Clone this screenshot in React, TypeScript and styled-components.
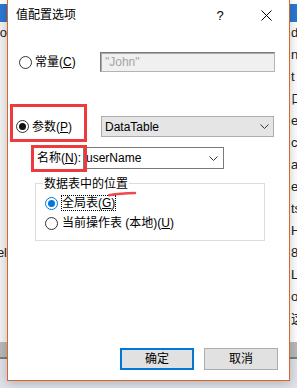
import React from "react";
import styled, { createGlobalStyle } from "styled-components";

const Global = createGlobalStyle`
  html, body { margin: 0; padding: 0; background: #fff; }
  body {
    font-family: "Liberation Sans", "Noto Sans CJK SC", sans-serif;
    font-size: 12px;
    color: #000;
  }
  * { box-sizing: border-box; }
`;

const Screen = styled.div`
  position: relative;
  width: 297px;
  height: 388px;
  overflow: hidden;
  background: #fff;
  display: flex;
  flex-direction: column;
`;

const Band = styled.div<{ $h: number; $bg: string }>`
  height: ${(p) => p.$h}px;
  flex: none;
  background: ${(p) => p.$bg};
`;

const Desk = styled.div`
  height: 320px;
  flex: none;
  display: grid;
  grid-template-columns: 7px 1fr 7px;
  background: #fff;
`;

const Strip = styled.div<{ $end?: boolean; $bg?: string }>`
  overflow: hidden;
  background: ${(p) => p.$bg || "#fff"};
  display: flex;
  flex-direction: column;
  align-items: stretch;
  font-size: 13px;
  line-height: 22px;
  color: #222;
`;

const StripLine = styled.div<{ $end?: boolean }>`
  height: 22px;
  display: flex;
  white-space: nowrap;
  justify-content: ${(p) => (p.$end ? "flex-end" : "flex-start")};
  padding-left: ${(p) => (p.$end ? 0 : 1)}px;
`;

const Dialog = styled.div`
  position: absolute;
  left: 7px;
  top: -1px;
  width: 283px;
  height: 382px;
  border: 1px solid #d9662b;
  background: #fff;
  box-shadow: 0 2px 10px rgba(0, 0, 0, 0.22);
  display: flex;
  flex-direction: column;
`;

const TitleBar = styled.div`
  height: 30px;
  flex: none;
  display: flex;
  align-items: center;
  padding-left: 8px;
`;

const TitleText = styled.div`
  flex: 1;
  font-size: 12px;
  line-height: 14px;
`;

const CaptionButton = styled.div`
  width: 46px;
  height: 30px;
  display: flex;
  align-items: center;
  justify-content: center;
  font-size: 13px;
`;

const Row = styled.div<{ $mt: number; $h: number; $pl: number }>`
  margin-top: ${(p) => p.$mt}px;
  height: ${(p) => p.$h}px;
  padding-left: ${(p) => p.$pl}px;
  display: flex;
  align-items: center;
  flex: none;
`;

const RadioLabel = styled.div<{ $w?: number; $gap?: number }>`
  width: ${(p) => (p.$w ? `${p.$w}px` : "auto")};
  height: 20px;
  display: flex;
  align-items: center;
  gap: ${(p) => p.$gap ?? 3}px;
  flex: none;
  line-height: 14px;
`;

const Circle = styled.span<{ $on?: "black" | "blue" }>`
  width: 13px;
  height: 13px;
  border-radius: 50%;
  flex: none;
  border: 1px solid
    ${(p) => (p.$on === "blue" ? "#0078d7" : "#333")};
  background: #fff;
  display: flex;
  align-items: center;
  justify-content: center;
  &::after {
    content: "";
    display: ${(p) => (p.$on ? "block" : "none")};
    width: 7px;
    height: 7px;
    border-radius: 50%;
    background: ${(p) => (p.$on === "blue" ? "#0078d7" : "#111")};
  }
`;

const FieldLabel = styled.div<{ $w: number }>`
  width: ${(p) => p.$w}px;
  flex: none;
  line-height: 14px;
`;

const DisabledBox = styled.div`
  width: 175px;
  height: 20px;
  border: 1px solid #b4b4b4;
  border-top-color: #7c7c7c;
  border-left-color: #7c7c7c;
  box-shadow: inset 1px 1px 0 #a9a9a9;
  background: #f0f0f0;
  color: #a5a5a5;
  padding-left: 4px;
  display: flex;
  align-items: center;
  line-height: 14px;
`;

const Combo = styled.div<{ $w: number; $h: number; $flat?: boolean }>`
  width: ${(p) => p.$w}px;
  height: ${(p) => p.$h}px;
  flex: none;
  border: 1px solid ${(p) => (p.$flat ? "#adadad" : "#7a7a7a")};
  background: ${(p) => (p.$flat ? "#e5e5e5" : "#fff")};
  display: flex;
  align-items: center;
  justify-content: space-between;
  padding-left: ${(p) => (p.$flat ? 3 : 2)}px;
  padding-right: ${(p) => (p.$flat ? 4 : 5)}px;
  line-height: 14px;
`;

const Group = styled.div`
  position: relative;
  margin-top: 14px;
  margin-left: 27px;
  width: 230px;
  height: 58px;
  flex: none;
  border: 1px solid #dcdcdc;
  padding-top: 9px;
  padding-left: 9px;
  display: flex;
  flex-direction: column;
`;

const Legend = styled.div`
  position: absolute;
  left: 7px;
  top: -7px;
  padding: 0 1px;
  background: #fff;
  line-height: 14px;
`;

const FocusText = styled.span`
  outline: 1px dotted #000;
  outline-offset: 0;
`;

const ButtonRow = styled.div`
  margin-top: auto;
  padding: 0 11px 10px 0;
  display: flex;
  justify-content: flex-end;
  gap: 10px;
  flex: none;
`;

const Button = styled.div<{ $primary?: boolean }>`
  width: 74px;
  height: 22px;
  background: #e1e1e1;
  border: ${(p) => (p.$primary ? "2px solid #0078d7" : "1px solid #adadad")};
  display: flex;
  align-items: center;
  justify-content: center;
  line-height: 14px;
`;

const RedBox = styled.div<{ $l: number; $t: number; $w: number; $h: number }>`
  position: absolute;
  left: ${(p) => p.$l}px;
  top: ${(p) => p.$t}px;
  width: ${(p) => p.$w}px;
  height: ${(p) => p.$h}px;
  border: 3px solid #ec3a3f;
  pointer-events: none;
`;

const Stroke = styled.svg`
  position: absolute;
  left: 100px;
  top: 191px;
`;

const Chevron = () => (
  <svg width="9" height="5" viewBox="0 0 9 5">
    <path d="M0.5 0.5 L4.5 4.5 L8.5 0.5" stroke="#333" fill="none" strokeWidth="1" />
  </svg>
);

const rightLines = ["d", "n", "t", "口", "e'", "ca", "a;", "e_", "ts", "H", "8", "L", "o", "这"];
const leftLines = ["ro", "", "", "", "", "", "", "", "", "", "el"];

export default function App() {
  return (
    <>
      <Global />
      <Screen>
        <Band $h={4} $bg="#fff" />
        <Band $h={18} $bg="#2b78d4" />
        <Desk>
          <Strip $bg="#f3f3f3">
            {leftLines.map((t, i) => (
              <StripLine key={i} $end>
                {t}
              </StripLine>
            ))}
          </Strip>
          <div />
          <Strip>
            {rightLines.map((t, i) => (
              <StripLine key={i}>{t}</StripLine>
            ))}
          </Strip>
        </Desk>
        <Band $h={15} $bg="#b9b9b9" />
        <Band $h={2} $bg="#7d7d7d" />
        <Band $h={29} $bg="#dfe2e8" />

        <Dialog>
          <TitleBar>
            <TitleText>值配置选项</TitleText>
            <CaptionButton>?</CaptionButton>
            <CaptionButton>
              <svg width="11" height="11" viewBox="0 0 11 11">
                <path d="M0.5 0.5 L10.5 10.5 M10.5 0.5 L0.5 10.5" stroke="#000" strokeWidth="1" fill="none" />
              </svg>
            </CaptionButton>
          </TitleBar>

          <Row $mt={22} $h={20} $pl={11}>
            <RadioLabel $w={81} $gap={3}>
              <Circle />
              <span>
                常量(<u>C</u>)
              </span>
            </RadioLabel>
            <DisabledBox>"John"</DisabledBox>
          </Row>

          <Row $mt={44} $h={21} $pl={8}>
            <RadioLabel $w={85} $gap={3}>
              <Circle $on="black" />
              <span>
                参数(<u>P</u>)
              </span>
            </RadioLabel>
            <Combo $w={173} $h={21} $flat>
              <span>DataTable</span>
              <Chevron />
            </Combo>
          </Row>

          <Row $mt={10} $h={22} $pl={29}>
            <FieldLabel $w={46}>
              名称(<u>N</u>):
            </FieldLabel>
            <Combo $w={141} $h={22}>
              <span>userName</span>
              <Chevron />
            </Combo>
          </Row>

          <Group>
            <Legend>数据表中的位置</Legend>
            <RadioLabel $gap={4}>
              <Circle $on="blue" />
              <FocusText>
                全局表(<u>G</u>)
              </FocusText>
            </RadioLabel>
            <RadioLabel $gap={4}>
              <Circle />
              <span>
                当前操作表 (本地)(<u>U</u>)
              </span>
            </RadioLabel>
          </Group>

          <ButtonRow>
            <Button $primary>确定</Button>
            <Button>取消</Button>
          </ButtonRow>

          <RedBox $l={2} $t={104} $w={77} $h={38} />
          <RedBox $l={23} $t={145} $w={56} $h={27} />
          <Stroke width="30" height="6" viewBox="0 0 30 6">
            <path d="M1 4.2 Q 12 2.2 27 2" stroke="#f0484e" strokeWidth="2.4" strokeLinecap="round" fill="none" />
          </Stroke>
        </Dialog>
      </Screen>
    </>
  );
}
